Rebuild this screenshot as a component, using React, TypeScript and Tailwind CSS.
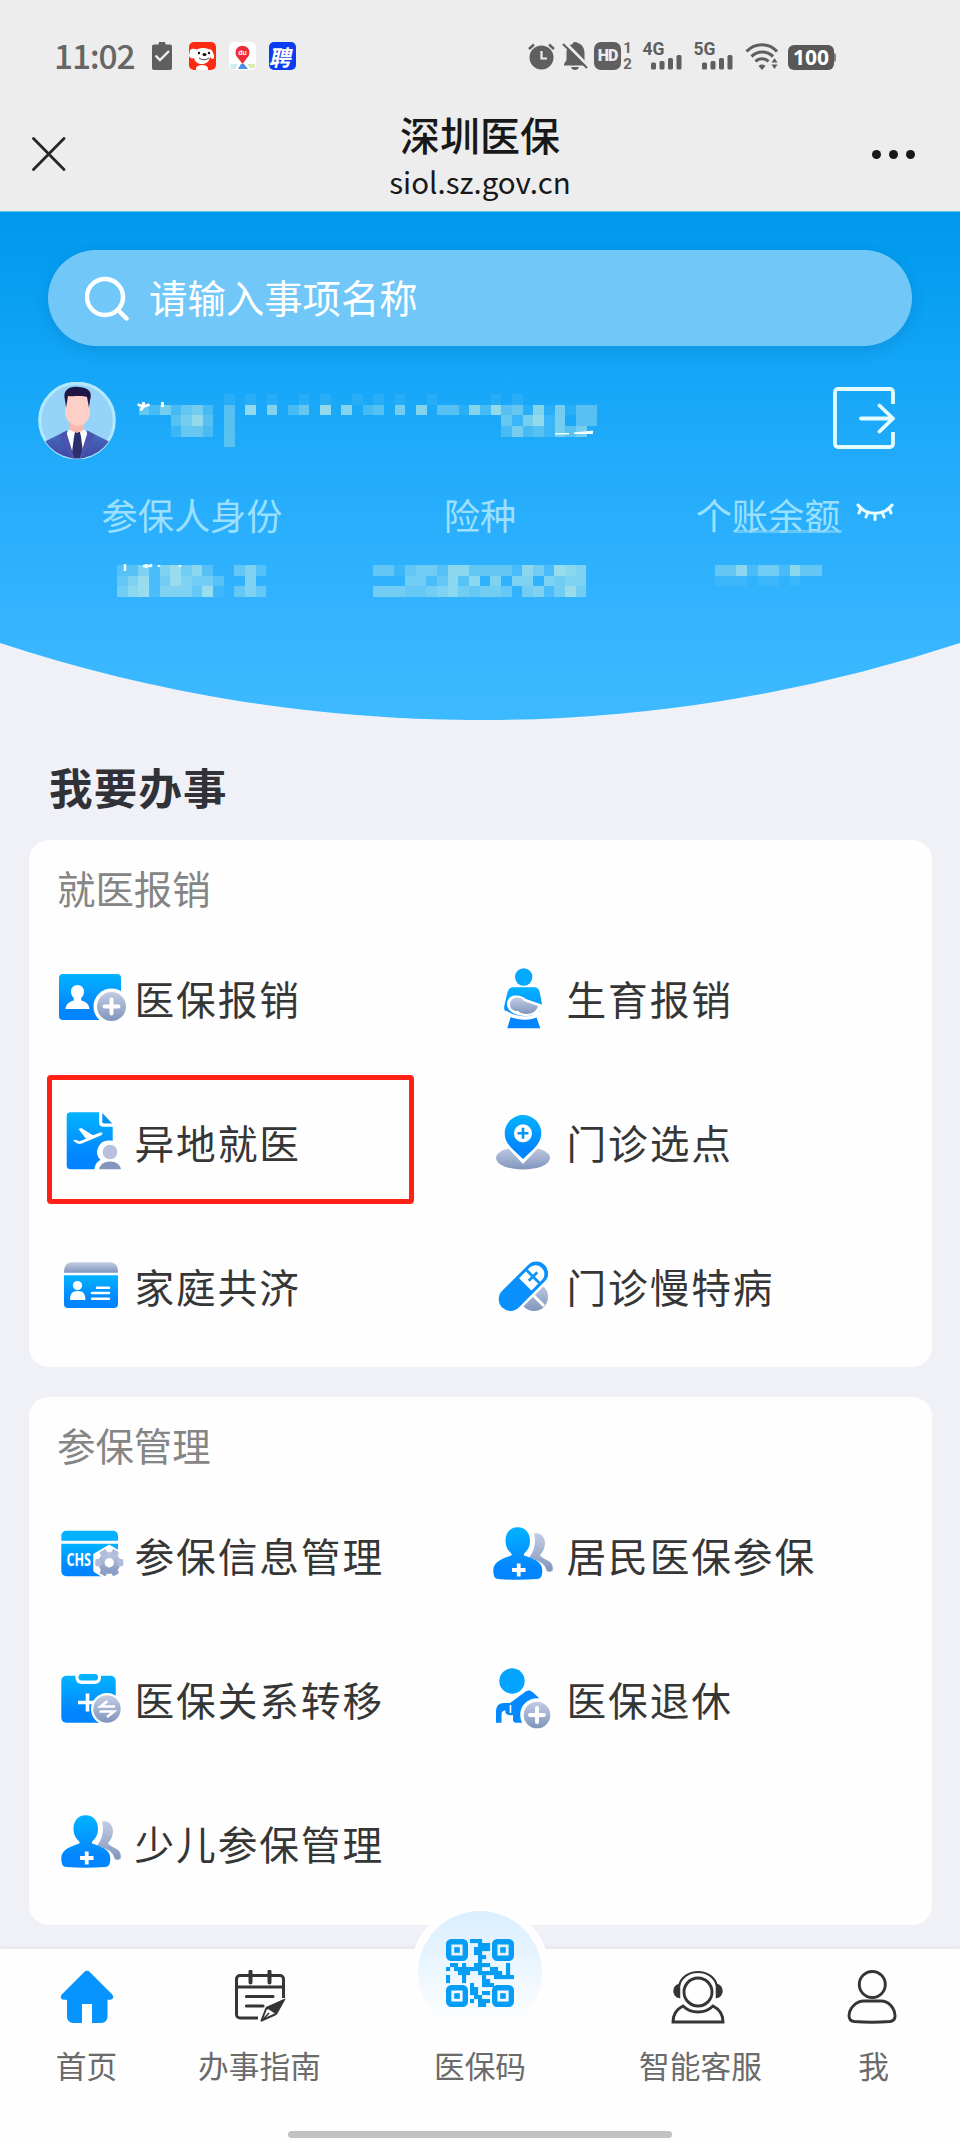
import type { ReactNode } from "react";

const CJK = "font-['Noto_Sans_CJK_SC',sans-serif]";

/* ---------- shared gradients ---------- */

function Gradients() {
  return (
    <svg className="absolute h-0 w-0" aria-hidden="true">
      <defs>
        <linearGradient id="blue" x1="0" y1="0" x2="0" y2="1">
          <stop offset="0" stopColor="#02b3ff" />
          <stop offset="0.75" stopColor="#0286ff" />
          <stop offset="1" stopColor="#0284ff" />
        </linearGradient>
        <linearGradient id="gray" x1="0" y1="0" x2="0" y2="1">
          <stop offset="0" stopColor="#c3cce3" />
          <stop offset="1" stopColor="#8095bd" />
        </linearGradient>
        <linearGradient id="hero" x1="0" y1="0" x2="0" y2="1">
          <stop offset="0" stopColor="#0099ec" />
          <stop offset="0.1" stopColor="#049df0" />
          <stop offset="0.35" stopColor="#18a7f8" />
          <stop offset="0.8" stopColor="#35b4ff" />
          <stop offset="1" stopColor="#3dbaff" />
        </linearGradient>
      </defs>
    </svg>
  );
}

/* ---------- status bar ---------- */

function StatusBar() {
  return (
    <div className="flex h-[84px] items-end pl-[54px] text-[#666]">
      <div className={`w-[98px] pb-[4px] text-[33.500px] leading-[50px] font-medium tracking-[-1.200px] ${CJK}`}>11:02</div>
      <svg className="mb-[14px] h-[28px] w-[20px]" viewBox="0 0 20 28" fill="none">
        <path d="M2 2.500h4.500a3.500 3.500 0 0 1 7 0H18a2 2 0 0 1 2 2V26a2 2 0 0 1-2 2H2a2 2 0 0 1-2-2V4.500a2 2 0 0 1 2-2Z" fill="#5f5f5f" />
        <path d="M3.500 13.500l4.500 4.500 9-9" stroke="#f0f0f0" strokeWidth="2.400" />
      </svg>
      <svg className="mb-[14px] ml-[17px] h-[28px] w-[27px]" viewBox="0 0 27 28">
        <rect width="27" height="28" rx="5" fill="#fb2b12" />
        <path d="M1 8c2-1.500 5-1.500 7-.5 3-2 9-2 12 0 2-1 4 2 5 6 .5 2-.5 4-2 3.500l-2-2c-1 5-4 7-8 7s-7-2-8-6c-2 1-4 0-5-2Z" fill="#fff" />
        <path d="M7 26c1-4 11-4 12 0v2H7Z" fill="#fff" />
        <circle cx="10" cy="11" r="1.200" fill="#111" />
        <circle cx="20" cy="11" r="1.200" fill="#111" />
        <ellipse cx="15.500" cy="12.500" rx="2" ry="1.500" fill="#111" />
        <path d="M10 16q5 3.500 10 0" stroke="#333" strokeWidth="0.900" fill="none" />
      </svg>
      <svg className="mb-[14px] ml-[13px] h-[28px] w-[27px]" viewBox="0 0 27 28">
        <rect width="27" height="28" rx="5" fill="#fff" />
        <path d="M1 22h8l-3 5H2Z" fill="#cdeef0" />
        <path d="M18 22h8v3l-4 2Z" fill="#d8eeb4" />
        <path d="M9 27l3-5h3l4 5Z" fill="#4a8ee6" />
        <path d="M13.500 22 9 16a7 7 0 1 1 9 0Z" fill="#ee2b36" />
        <text x="13.500" y="13" fontSize="7" fontWeight="700" fill="#fff" textAnchor="middle" fontFamily="Liberation Sans">du</text>
      </svg>
      <div className="mb-[14px] ml-[13px] flex h-[28px] w-[27px] items-center justify-center rounded-[5px] bg-[#0b3cf0]">
        <span className={`-skew-x-12 text-[22px] leading-none font-bold text-white ${CJK}`}>聘</span>
      </div>

      {/* alarm */}
      <svg className="mb-[14px] ml-[232px] h-[28px] w-[27px]" viewBox="0 0 27 28" fill="none">
        <circle cx="13.500" cy="15.500" r="12" fill="#5f5f5f" />
        <path d="M1 7l5-4.500M26 7l-5-4.500" stroke="#5f5f5f" strokeWidth="2.500" />
        <path d="M13.500 9v7.500h5.500" stroke="#ececec" strokeWidth="2.200" />
      </svg>
      {/* muted bell */}
      <svg className="mb-[14px] ml-[7px] h-[28px] w-[26px]" viewBox="0 0 26 28" fill="none">
        <path d="M13 0a2.500 2.500 0 0 1 2.500 1C20 2 22.500 6 22.500 11v7l2.500 4v1.500H2V22l2.500-4v-7c0-4.500 2-8 6-9A2.500 2.500 0 0 1 13 0Z" fill="#5f5f5f" />
        <path d="M9 25h8c-.5 2-2 3-4 3s-3.500-1-4-3Z" fill="#5f5f5f" />
        <path d="M3 .5 27 25" stroke="#ececec" strokeWidth="3" />
        <path d="M1 2l24 24" stroke="#5f5f5f" strokeWidth="2.200" />
      </svg>
      {/* HD */}
      <div className="mb-[14px] ml-[6px] flex h-[28px] w-[27px] items-center justify-center rounded-[7px] bg-[#5f5f5f] font-['Roboto',sans-serif] text-[16px] leading-none font-black tracking-[-1px] text-[#ececec]">
        HD
      </div>
      <div className="mb-[13px] ml-[1px] flex h-[30px] w-[11px] flex-col items-center justify-between font-['Roboto',sans-serif] text-[15px] leading-[14px] font-bold">
        <span>1</span>
        <span>2</span>
      </div>
      <Signal label="4G" className="ml-[8px]" />
      <Signal label="5G" className="ml-[9px]" />
      {/* wifi */}
      <svg className="mb-[14px] ml-[11px] h-[27px] w-[34px]" viewBox="0 0 34 27" fill="none">
        <path d="M1.500 8.500C10-.5 24-.5 32 8.500" stroke="#5f5f5f" strokeWidth="3.200" />
        <path d="M6.500 13.500c6-6 15.500-6 21.500 0" stroke="#5f5f5f" strokeWidth="3.200" />
        <path d="M10.500 18.500c3.500-3.700 9.500-3.700 13 0" stroke="#5f5f5f" strokeWidth="3" />
        <path d="M13.500 23a5 5 0 0 1 7 0l-3.500 4Z" fill="#5f5f5f" />
        <path d="M26.500 19.500l3-4.500 3 4.500ZM26.500 21.500h6l-3 4.500Z" fill="#5f5f5f" />
      </svg>
      {/* battery */}
      <div className="mb-[14px] ml-[9px] flex h-[25px] w-[46px] items-center justify-center rounded-[6px] bg-[#585858] font-['Open_Sans',sans-serif] text-[21px] leading-none font-bold text-white">
        100
      </div>
      <div className="mb-[22px] h-[9px] w-[2px] rounded-r bg-[#858585]" />
    </div>
  );
}

function Signal({ label, className }: { label: string; className: string }) {
  return (
    <svg className={`mb-[14px] h-[30px] w-[42px] overflow-visible ${className}`} viewBox="-1 -2 42 30" fill="#5f5f5f">
      <text x="0.500" y="13" fontSize="17.500" fontWeight="700" fontFamily="Roboto">{label}</text>
      <rect x="9" y="20.500" width="5" height="7" rx="1.500" />
      <rect x="17.500" y="19" width="5" height="8.500" rx="1.500" />
      <rect x="26" y="16" width="5" height="11.500" rx="1.500" />
      <rect x="34.500" y="13" width="5" height="14.500" rx="1.500" />
    </svg>
  );
}

function TitleBar() {
  return (
    <div className="grid h-[127px] grid-cols-[1fr_auto_1fr] items-start pr-[45px] pl-[32px]">
      <svg className="mt-[53px] h-[34px] w-[34px]" viewBox="0 0 34 34" stroke="#262626" strokeWidth="2.800" strokeLinecap="round">
        <path d="M1.500 1.500l30.500 31M32 1.500l-30.500 31" />
      </svg>
      <div className={`flex flex-col items-center pl-[13px] text-[#181818] ${CJK}`}>
        <h1 className="mt-[26px] text-[40px] leading-[48px] font-medium">深圳医保</h1>
        <p className="mt-[4px] text-[29.500px] leading-[38px]">siol.sz.gov.cn</p>
      </div>
      <div className="mt-[66px] flex justify-end gap-[8px]">
        <span className="h-[9px] w-[9px] rounded-full bg-[#181818]" />
        <span className="h-[9px] w-[9px] rounded-full bg-[#181818]" />
        <span className="h-[9px] w-[9px] rounded-full bg-[#181818]" />
      </div>
    </div>
  );
}

/* ---------- pixelated private values ---------- */

const CELL = 10.667;

function Mosaic({ rows, className, children }: { rows: string[]; className: string; children?: ReactNode }) {
  const width = rows[0].length * CELL;
  const height = rows.length * CELL;
  return (
    <svg className={`overflow-visible ${className}`} width={width} height={height} viewBox={`0 0 ${width} ${height}`} shapeRendering="crispEdges">
      {rows.flatMap((row, y) =>
        row.split("").map((level, x) =>
          level === "0" ? null : (
            <rect key={`${x}-${y}`} x={x * CELL} y={y * CELL} width={CELL} height={CELL} fill="#c4eee6" fillOpacity={Number(level) * 0.088} />
          )
        )
      )}
      {children}
    </svg>
  );
}

type Run = [number, string];

function buildRow(length: number, runs: Run[]) {
  const cells = Array<string>(length).fill("0");
  runs.forEach(([start, text]) => text.split("").forEach((c, i) => (cells[start + i] = c)));
  return cells.join("");
}

const IDENTITY = [
  buildRow(44, [[9, "1"], [11, "1"], [13, "1"], [16, "1"], [18, "1"], [21, "1"], [23, "1"], [25, "1"], [28, "1"], [34, "1"], [36, "1"]]),
  buildRow(44, [[1, "5363563"], [9, "4"], [11, "8070350807034060704417384517"], [39, "16144"]]),
  buildRow(44, [[4, "4684"], [9, "4"], [35, "526826044"]]),
  buildRow(44, [[4, "2553"], [9, "4"], [35, "363426460"]]),
  buildRow(44, [[9, "4"]]),
];

const STATUS = ["33626857300463", "46825865530060", "57826664810464"];
const INSURANCE = ["44145537744442752876", "00055247370606606566", "55544567545540562585"];
const BALANCE = ["4472552744", "1110110100"];

/* ---------- hero ---------- */

function Avatar() {
  return (
    <svg className="h-[78px] w-[78px]" viewBox="0 0 78 78">
      <defs>
        <clipPath id="avatarClip">
          <circle cx="39" cy="38.500" r="38" />
        </clipPath>
        <linearGradient id="suit" x1="0" y1="0" x2="0" y2="1">
          <stop offset="0" stopColor="#4470bf" />
          <stop offset="1" stopColor="#4141a0" />
        </linearGradient>
      </defs>
      <circle cx="39" cy="38.500" r="37.300" fill="#97d3f8" stroke="#b3e9ff" strokeWidth="3" />
      <g clipPath="url(#avatarClip)">
        <path d="M6 60l24-12h18l24 12v20H6Z" fill="url(#suit)" />
        <path d="M30 48h18l2 6-6 24H34L28 54Z" fill="#fff" />
        <path d="M37 50h5l1 5 3 23H33l3-23Z" fill="#2c2f6e" />
        <path d="M28 49 21 53 34 78h3ZM50 49l7 4-14 25h-2Z" fill="#4a54ae" />
        <path d="M32 37h14v11l-7 3-7-3Z" fill="#f7b9b0" />
        <path d="M27 14h25v17c-1 8-7 13-12.500 13S28 39 27 31Z" fill="#fdcfc6" />
        <path d="M28 26 27 18C24 8 32 4 40 5c10 0 15 5 12 13l-1 8-2-11c-7-2-13 0-19-1Z" fill="#1f1645" />
      </g>
    </svg>
  );
}

function Hero() {
  return (
    <section className="relative h-[509px] border-t border-[#62c6da]">
      <svg className="absolute inset-0 h-[508px] w-[960px]" viewBox="0 0 960 508">
        <path d="M0 0H960V431A1534 1534 0 0 1 0 431Z" fill="url(#hero)" />
      </svg>
      <div className="relative px-[48px] pt-[38px]">
        <div className="flex h-[96px] items-center rounded-full bg-[#71c8f8] pl-[37px] shadow-[0_4px_14px_rgba(0,70,130,0.18)]">
          <svg className="h-[45px] w-[45px]" viewBox="0 0 45 45" fill="none" stroke="#fff" strokeWidth="4.500" strokeLinecap="round">
            <circle cx="20" cy="21" r="18" />
            <path d="M33 34l8.500 8.500" />
          </svg>
          <span className={`-mt-[3px] ml-[19px] text-[38.400px] leading-none text-white ${CJK}`}>请输入事项名称</span>
        </div>

        <div className="-ml-[10px] mt-[36px] flex h-[79px] items-start">
          <Avatar />
          <Mosaic rows={IDENTITY} className="mt-[12px] ml-[12px]">
            <path d="M15.500 8v5M9.500 10.500l6 2 6-2M15.500 12.500l-3 4M34.500 8v5" stroke="#fff" strokeWidth="2.800" fill="none" shapeRendering="auto" />
            <path d="M446 38.500l19-2v3.500h-19ZM427 39h14v1.500h-14Z" fill="#f0fffa" shapeRendering="auto" />
          </Mosaic>
          <svg className="mt-[5px] mr-[17px] ml-auto h-[62px] w-[62px]" viewBox="0 0 62 62" fill="none" stroke="#e4fcff" strokeWidth="3.800">
            <path d="M60 17V5a3 3 0 0 0-3-3H5a3 3 0 0 0-3 3v52a3 3 0 0 0 3 3h52a3 3 0 0 0 3-3V45" />
            <path d="M28 31.500h32M46.500 18.500 60 31.500 46.500 44.500" strokeLinejoin="round" strokeLinecap="round" />
          </svg>
        </div>

        <div className={`relative mt-[31px] grid grid-cols-3 text-center text-[36.200px] leading-[44px] text-[#9be0ff] ${CJK}`}>
          <span>参保人身份</span>
          <span>险种</span>
          <span>个账余额</span>
          <span className="absolute top-[38px] left-[688px] h-[3px] w-[106px] bg-[#8fd6f4]/60" />
          <svg className="absolute top-[11px] left-[808px] h-[18px] w-[38px]" viewBox="0 0 38 18" fill="none" stroke="#e8fbff" strokeWidth="3" strokeLinecap="round">
            <path d="M2 2c8 11 26 11 34 0M5 5l-2 5M12 9l-2 5M19 11v5.500M26 9l2 5M33 5l2 5" />
          </svg>
        </div>
        <div className="mt-[29px] grid h-[32px] grid-cols-3 justify-items-center">
          <Mosaic rows={STATUS} className="">
            <path d="M8 -1v7M26 1h8M29 -1v4M34-1v3M42 0v2M63 0v2" stroke="#eaffff" strokeWidth="2.500" shapeRendering="auto" />
          </Mosaic>
          <Mosaic rows={INSURANCE} className="" />
          <Mosaic rows={BALANCE} className="" />
        </div>
      </div>
    </section>
  );
}

/* ---------- service icons, all on a 76×76 board ---------- */

function Board({ children }: { children: ReactNode }) {
  return (
    <svg className="h-[76px] w-[76px] shrink-0" viewBox="0 0 76 76" fill="none">
      {children}
    </svg>
  );
}

function PlusBadge({ cx, cy, r }: { cx: number; cy: number; r: number }) {
  return (
    <g>
      <circle cx={cx} cy={cy} r={r + 3.5} fill="#fff" />
      <circle cx={cx} cy={cy} r={r} fill="url(#gray)" />
      <path d={`M${cx - 7} ${cy}h14M${cx} ${cy - 7}v14`} stroke="#fff" strokeWidth="4" strokeLinecap="round" />
    </g>
  );
}

function ClaimIcon() {
  return (
    <Board>
      <rect x="2" y="12" width="62" height="46" rx="4" fill="url(#blue)" />
      <path d="M20.500 23c4.200 0 6.500 3 6.500 6.500 0 3-1.200 5-2.800 6.500v2.500c5 1.500 7.800 3.500 8.300 8.500h-24c.5-5 3.300-7 8.300-8.500V36c-1.600-1.500-2.800-3.500-2.800-6.500 0-3.500 2.300-6.500 6.500-6.500Z" fill="#fff" />
      <PlusBadge cx={54.5} cy={44.5} r={14.5} />
    </Board>
  );
}

function MaternityIcon() {
  return (
    <Board>
      <circle cx="34.700" cy="15" r="8.700" fill="#02a9ff" />
      <path d="M24 25.300h21c3.500 0 5 2 5.700 5L53 42l-2 7-4 5 4.300 12.300h-33L22 54c-4-3-7-5-6.900-9l2.900-13c1-4 2.500-6.700 6-6.700Z" fill="url(#blue)" />
      <path d="M16 50c6 4 12 6 20 6 7 0 12-2 15-6" stroke="#fff" strokeWidth="3.500" />
      <path d="M26 33.500c4-.5 8 1 11 3.500L54 43c-1 6-7 11-16 11-8 0-20-3-20-12 0-5 4-8.500 8-8.500Z" fill="#fff" />
      <path d="M21 42.500c0-8 11-9 14-3.500l14 5c-1 5-6 8-11 8-4 0-7-1-9-3-4 .5-8-2-8-6.500Z" fill="url(#gray)" />
    </Board>
  );
}

function RemoteIcon() {
  return (
    <Board>
      <path d="M13.500 6.300H42v10c0 3 1.500 4.500 4.500 4.500h9.200V63.300H13.500a3.800 3.800 0 0 1-3.800-3.800V10.100a3.800 3.800 0 0 1 3.800-3.800Z" fill="url(#blue)" />
      <path d="M45.300 7l10 10.500H47a1.700 1.700 0 0 1-1.700-1.700Z" fill="#0494ef" />
      <path d="M16 34.500l2.500-.8 4 1.500 6.500-2.400-7.500-9.800 2.800-1 11.500 7.200 7.500-2.600c2.500-.5 3 1.700.5 2.800l-19 8.200c-2.500.8-4.500.2-6-1Z" fill="#fff" />
      <path d="M53 34.500a11.500 11.500 0 0 1 7 20.500l7 9H37.500c0-5 2-8 6-10a11.500 11.500 0 0 1 9.500-19.500Z" fill="#fff" />
      <circle cx="53" cy="46" r="7.300" fill="#b7c1de" />
      <path d="M42 63.300c1-5 5-7.800 11-7.800s10 2.800 11 7.800Z" fill="#8496bd" />
    </Board>
  );
}

function PinIcon() {
  return (
    <Board>
      <ellipse cx="34" cy="52" rx="27" ry="11.500" fill="url(#gray)" />
      <path d="M34 58 17 40h34Z" fill="#fff" />
      <path d="M34 9a18.300 18.300 0 0 1 18.300 18.300c0 8-5 13-9 17L34 53l-9.300-8.700c-4-4-9-9-9-17A18.300 18.300 0 0 1 34 9Z" fill="url(#blue)" />
      <circle cx="34" cy="27.300" r="9" fill="#fff" />
      <path d="M28.500 27.300h11M34 21.800v11" stroke="#0694f5" strokeWidth="2.600" />
    </Board>
  );
}

function FamilyIcon() {
  return (
    <Board>
      <path d="M7 22.700C7 16 9.500 12.300 15 12.300h38c5.500 0 8 3.700 8 10.400Z" fill="url(#gray)" />
      <path d="M7 25.300h54V54a4 4 0 0 1-4 4H11a4 4 0 0 1-4-4Z" fill="url(#blue)" />
      <circle cx="20.500" cy="35.500" r="4.600" fill="#fff" />
      <path d="M13 50c0-6 2-9 7.700-9s7.700 3 7.700 9Z" fill="#fff" />
      <path d="M40 37.700h12M35 43h17M35 48.700h17" stroke="#fff" strokeWidth="2.500" strokeLinecap="round" />
    </Board>
  );
}

function PillIcon() {
  return (
    <Board>
      <circle cx="45" cy="47" r="14" fill="url(#gray)" />
      <path d="M40 41l15 15" stroke="#fff" strokeWidth="3" />
      <g transform="rotate(-45 34.400 36.200)">
        <rect x="1.500" y="22" width="66" height="28.500" rx="14.200" fill="#fff" />
        <rect x="4.400" y="24.500" width="60" height="23.500" rx="11.700" fill="#0a90fd" />
        <path d="M37 27.500h15.500a8.800 8.800 0 0 1 0 17.500H37Z" fill="#fff" />
        <path d="M42 36.200h12M48 27v4M48 45.500v-4M48 31v11" stroke="#1495f8" strokeWidth="2.800" />
      </g>
    </Board>
  );
}

function CardGearIcon() {
  return (
    <Board>
      <path d="M9.300 11.700h46.700a5 5 0 0 1 5 5v5H4.300v-5a5 5 0 0 1 5-5Z" fill="#02b1ff" />
      <path d="M4.300 24.700H61v32.600H9.300a5 5 0 0 1-5-5Z" fill="url(#blue)" />
      <text x="9.500" y="46.500" fontSize="17.500" fontWeight="700" fill="#fff" fontFamily="Open Sans" textLength="24.500" lengthAdjust="spacingAndGlyphs">CHS</text>
      <g transform="translate(52.300 43.700)">
        <path d="M-14.500-8 0-16.500l14.500 8.500v16.500L0 17l-14.500-9Z" fill="#fff" stroke="#fff" strokeWidth="3" strokeLinejoin="round" />
        <circle r="11" fill="url(#gray)" />
        {[30, 90, 150, 210, 270, 330].map((a) => (
          <rect key={a} x="-3.600" y="-14" width="7.200" height="6" rx="1.500" transform={`rotate(${a})`} fill={a > 100 && a < 260 ? "#8d9fc6" : "#b0bcda"} />
        ))}
        <circle r="4.700" fill="#fff" />
      </g>
    </Board>
  );
}

function PeopleIcon() {
  return (
    <Board>
      <path d="M45 14.500c6-1.500 11 3 11 9.500 0 5-2 9-5 12 1 4 12.700 5 12.700 12v3.500c-2 1.500-4 1.500-6 .5-1-7-8-11-18-13 5-5 8-16 5.300-24.500Z" fill="url(#gray)" />
      <path d="M28.700 8.300c8 0 12.300 6 12.300 13.500 0 6-2.500 10-6 12.700v2c8 2.500 18.300 6 18.300 14.500 0 6-1.500 9-5 9-13 1-26 1-39 0-3.500 0-5-3-5-9 0-8.500 10.200-12 18.200-14.500v-2c-3.500-2.700-6-6.700-6-12.700 0-7.500 4.200-13.500 12.200-13.500Z" fill="url(#blue)" />
      <path d="M23 51h13.500M29.700 44.500v13" stroke="#fff" strokeWidth="3.800" />
    </Board>
  );
}

function TransferIcon() {
  return (
    <Board>
      <rect x="4.300" y="12.700" width="54.400" height="47" rx="5" fill="url(#blue)" />
      <path d="M18.500 11h25.500v4a6 6 0 0 1-6 6H24.500a6 6 0 0 1-6-6Z" fill="#fff" />
      <path d="M21.500 14.200a3.200 3.200 0 0 1 3.200-3.200h13.100a3.200 3.200 0 0 1 0 6.400H24.700a3.200 3.200 0 0 1-3.200-3.200Z" fill="#02b1ff" />
      <path d="M21 39.500h19M30.500 30.500v18" stroke="#fff" strokeWidth="3.600" />
      <circle cx="50" cy="46" r="16" fill="#fff" />
      <circle cx="50" cy="46" r="13.700" fill="url(#gray)" />
      <path d="M58 43.500H43.500l7-5.500M42.500 48.500H57l-7 5.500" stroke="#fff" strokeWidth="2.500" />
    </Board>
  );
}

function RetireIcon() {
  return (
    <Board>
      <circle cx="23" cy="18" r="12.700" fill="#02a4ff" />
      <path d="M7 59.700V49c0-6 3-9 8-9h6l15-11c3-2 5-2 7.500 0L50 35v10L38 59.700H27c-2 0-3-1-3-3V52c-3 .8-6 0-7.500-2v-2.500c-2.500 0-4 1-4 4v8.200Z" fill="#0288ff" />
      <path d="M21.500 42v8" stroke="#fff" strokeWidth="1.600" />
      <PlusBadge cx={48} cy={52} r={13.3} />
    </Board>
  );
}

/* ---------- service cards ---------- */

type Service = { label: string; icon: ReactNode; highlighted?: boolean };

function ServiceCard({ title, services, className }: { title: string; services: Service[]; className: string }) {
  return (
    <section className={`mx-[28.500px] rounded-[20px] bg-[#fefefe] pl-[28.500px] ${className}`}>
      <h3 className={`flex h-[88px] items-center pt-[6px] text-[38.400px] leading-none text-[#858585] ${CJK}`}>{title}</h3>
      <div className="grid grid-cols-[432px_432px]">
        {services.map((s) => (
          <div key={s.label} className="relative flex h-[144px] items-center">
            {s.icon}
            <span className={`-mt-[4px] ml-[1.500px] text-[39.700px] leading-none tracking-[1.900px] whitespace-nowrap text-[#363636] ${CJK}`}>{s.label}</span>
            {s.highlighted && <span className="absolute top-[3px] -left-[10px] h-[129px] w-[367px] rounded-[4px] border-5 border-[#ff2116]" />}
          </div>
        ))}
      </div>
    </section>
  );
}

const MEDICAL: Service[] = [
  { label: "医保报销", icon: <ClaimIcon /> },
  { label: "生育报销", icon: <MaternityIcon /> },
  { label: "异地就医", icon: <RemoteIcon />, highlighted: true },
  { label: "门诊选点", icon: <PinIcon /> },
  { label: "家庭共济", icon: <FamilyIcon /> },
  { label: "门诊慢特病", icon: <PillIcon /> },
];

const ENROLMENT: Service[] = [
  { label: "参保信息管理", icon: <CardGearIcon /> },
  { label: "居民医保参保", icon: <PeopleIcon /> },
  { label: "医保关系转移", icon: <TransferIcon /> },
  { label: "医保退休", icon: <RetireIcon /> },
  { label: "少儿参保管理", icon: <PeopleIcon /> },
];

/* ---------- bottom navigation ---------- */

const QR_ROWS = [
  "......###........",
  "........###......",
  ".......####......",
  ".......##........",
  "........##.......",
  "........#........",
  ".##.#..####....#.",
  "#.#######..##..#.",
  "...###..######.#.",
  "#...#....#..#####",
  "#...#....##......",
  "......#..###.....",
  "......##.........",
  "......##.##......",
  ".......##........",
  "......#.###......",
  "........##.......",
];

const QR_CORNERS = [
  { x: 0, y: 0 },
  { x: 46, y: 0 },
  { x: 0, y: 46 },
  { x: 46, y: 46 },
];

function QrCode() {
  return (
    <svg className="h-[68px] w-[68px]" viewBox="0 0 68 68" fill="#069ef5">
      {QR_CORNERS.map(({ x, y }) => (
        <g key={`${x}-${y}`}>
          <rect x={x + 2.7} y={y + 2.7} width="16.600" height="16.600" rx="2.500" fill="none" stroke="#069ef5" strokeWidth="5.400" />
          <rect x={x + 8.2} y={y + 8.2} width="5.600" height="5.600" />
        </g>
      ))}
      {QR_ROWS.flatMap((row, y) => row.split("").map((c, x) => (c === "#" ? <rect key={`${x}_${y}`} x={x * 4} y={y * 4} width="4.100" height="4.100" /> : null)))}
    </svg>
  );
}

function HomeIcon() {
  return (
    <svg className="h-[54px] w-[54px]" viewBox="0 0 54 54" fill="#0794ff">
      <path d="M24 2.200a4 4 0 0 1 6 0l22 22c2.500 2.800 1 5.500-2 5.500H47.500V47a6 6 0 0 1-6 6H32V34H22V53H13a6 6 0 0 1-6-6V29.700H4c-3 0-4.500-2.700-2-5.500Z" />
    </svg>
  );
}

function GuideIcon() {
  return (
    <svg className="h-[54px] w-[54px]" viewBox="0 0 54 54" fill="none" stroke="#353535" strokeWidth="3">
      <path d="M50.500 28V9a3.500 3.500 0 0 0-3.500-3.500H7A3.500 3.500 0 0 0 3.500 9v35.500A3.500 3.500 0 0 0 7 48h18" />
      <path d="M3.500 17h47" />
      <path d="M17.500 1.500v11M36.500 1.500v11" strokeWidth="4" strokeLinecap="round" />
      <path d="M13.500 26.500H40M13.500 36H30" strokeLinecap="round" strokeWidth="3.200" />
      <path d="M50.500 30.500 33 39 28.500 50.500 42 44.500Z" strokeWidth="2" strokeLinejoin="round" />
      <path d="M51 30 34 37.500l9.500 6ZM28.500 51l7.500-8" fill="#353535" strokeWidth="1.600" />
    </svg>
  );
}

function SupportIcon() {
  return (
    <svg className="mr-[6px] h-[54px] w-[54px]" viewBox="0 0 54 54" fill="none" stroke="#353535" strokeWidth="2.900">
      <circle cx="27" cy="22" r="14" />
      <path d="M8 16C10 7 18 2 27 2s17 5 19 14" strokeWidth="2.200" />
      <path d="M8.500 14.500v13C5 27 3 24 3 21s2-6 5.500-6.500ZM45.500 14.500v13C49 27 51 24 51 21s-2-6-5.500-6.500Z" fill="#353535" strokeWidth="1.500" />
      <path d="M2 52c0-8 4-13 10-16 4 4 9 6 15 6s11-2 15-6c6 3 10 8 10 16Z" />
    </svg>
  );
}

function MeIcon() {
  return (
    <svg className="mr-[3px] h-[54px] w-[54px]" viewBox="0 0 54 54" fill="none" stroke="#353535" strokeWidth="2.900">
      <circle cx="27.300" cy="14.500" r="13" />
      <path d="M19 31h17c8 0 13.500 7 14 14.500.3 4-1.500 5.500-5 6-11 1-25 1-36 0-3.500-.5-5-2-5-6C4.500 38 11 31 19 31Z" />
    </svg>
  );
}

function NavItem({ label, icon }: { label: string; icon: ReactNode }) {
  return (
    <div className="flex flex-col items-center pt-[21px]">
      {icon}
      <span className="mt-[19px] text-[30.700px] leading-[44px]">{label}</span>
    </div>
  );
}

function BottomNav() {
  return (
    <nav className={`relative mt-[24px] h-[191px] bg-[#fefefe] text-[#6b6b6b] shadow-[0_-2px_5px_rgba(0,0,0,0.05)] ${CJK}`}>
      <div className="absolute top-[-46px] left-[410px] h-[140px] w-[140px] rounded-full bg-[#fefefe] p-[8px]">
        <div className="flex h-[124px] w-[124px] items-center justify-center rounded-full bg-linear-to-b from-[#d9eeff] to-[#fefefe] to-90%">
          <QrCode />
        </div>
      </div>
      <div className="relative grid grid-cols-[173px_173px_268px_173px_173px]">
        <NavItem label="首页" icon={<HomeIcon />} />
        <NavItem label="办事指南" icon={<GuideIcon />} />
        <NavItem label="医保码" icon={<div className="h-[54px]" />} />
        <NavItem label="智能客服" icon={<SupportIcon />} />
        <NavItem label="我" icon={<MeIcon />} />
      </div>
      <div className="mx-auto mt-[44px] h-[7px] w-[384px] rounded-full bg-[#c1c1c1]" />
    </nav>
  );
}

export default function App() {
  return (
    <main className="h-[2140px] w-[960px] overflow-hidden bg-[#f0f1f6]">
      <Gradients />
      <header className="bg-[#ededed]">
        <StatusBar />
        <TitleBar />
      </header>
      <Hero />
      <h2 className={`flex h-[119px] items-end pb-[24px] pl-[49px] text-[43.500px] leading-[56px] font-bold tracking-[1.200px] text-[#313238] ${CJK}`}>我要办事</h2>
      <ServiceCard title="就医报销" services={MEDICAL} className="mt-px h-[527px]" />
      <ServiceCard title="参保管理" services={ENROLMENT} className="mt-[30px] h-[528px]" />
      <BottomNav />
    </main>
  );
}
